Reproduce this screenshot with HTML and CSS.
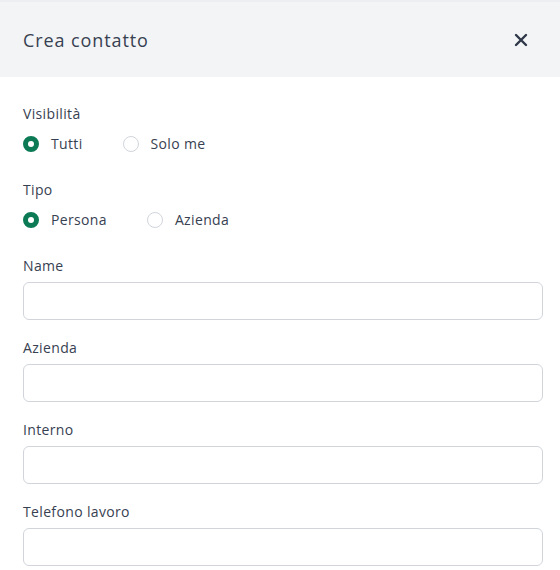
FILE: index.html
```html
<!DOCTYPE html>
<html lang="it">
<head>
<meta charset="utf-8">
<title>Crea contatto</title>
<link rel="stylesheet" href="styles.css">
</head>
<body>
<div class="modal">
  <div class="modal-header">
    <h2 class="modal-title">Crea contatto</h2>
    <button class="close-btn" type="button" aria-label="Chiudi">
      <svg width="14" height="14" viewBox="0 0 14 14"><path d="M2 2 L12 12 M12 2 L2 12" stroke="#2d3748" stroke-width="2.4" stroke-linecap="round"/></svg>
    </button>
  </div>
  <form class="modal-body">
    <div class="field">
      <div class="label">Visibilità</div>
      <div class="radio-row">
        <label class="radio"><span class="dot checked"></span>Tutti</label>
        <label class="radio"><span class="dot"></span>Solo me</label>
      </div>
    </div>
    <div class="field">
      <div class="label">Tipo</div>
      <div class="radio-row">
        <label class="radio"><span class="dot checked"></span>Persona</label>
        <label class="radio"><span class="dot"></span>Azienda</label>
      </div>
    </div>
    <div class="field input-field">
      <label class="label">Name</label>
      <input class="input" type="text">
    </div>
    <div class="field input-field">
      <label class="label">Azienda</label>
      <input class="input" type="text">
    </div>
    <div class="field input-field">
      <label class="label">Interno</label>
      <input class="input" type="text">
    </div>
    <div class="field input-field">
      <label class="label">Telefono lavoro</label>
      <input class="input" type="text">
    </div>
  </form>
</div>
</body>
</html>
```
FILE: styles.css
```css
* { box-sizing: border-box; }
body {
  margin: 0;
  background: #fff;
  font-family: "Open Sans", "Noto Sans", sans-serif;
  color: #374151;
}
.modal { width: 560px; }
.modal-header {
  height: 77px;
  background: #f3f4f6;
  border-top: 2px solid #eceef1;
  display: flex;
  align-items: center;
  justify-content: space-between;
  padding: 0 32px 0 23px;
}
.modal-title {
  margin: 0;
  font-size: 18px;
  font-weight: 400;
  letter-spacing: 0.9px;
  color: #374151;
}
.close-btn {
  border: 0;
  background: none;
  padding: 0;
  width: 14px;
  height: 14px;
  display: flex;
}
.modal-body {
  padding: 27px 17px 0 23px;
  display: flex;
  flex-direction: column;
  gap: 26px;
}
.input-field + .input-field { margin-top: -8px; }
.field { display: flex; flex-direction: column; gap: 10px; }
.input-field { gap: 6px; }
.label {
  font-size: 14px;
  line-height: 20px;
  letter-spacing: 0.35px;
  color: #374151;
}
.radio-row { display: flex; gap: 40px; }
.radio {
  display: flex;
  align-items: center;
  gap: 12px;
  font-size: 14px;
  line-height: 20px;
  letter-spacing: 0.35px;
  color: #374151;
}
.dot {
  width: 16px;
  height: 16px;
  border-radius: 50%;
  border: 1px solid #d1d5db;
  background: #fff;
}
.dot.checked {
  border: 5px solid #0b7a55;
  background: #fff;
}
.input {
  height: 38px;
  width: 100%;
  border: 1px solid #d1d5db;
  border-radius: 6px;
  background: #fff;
  font: inherit;
}
```
